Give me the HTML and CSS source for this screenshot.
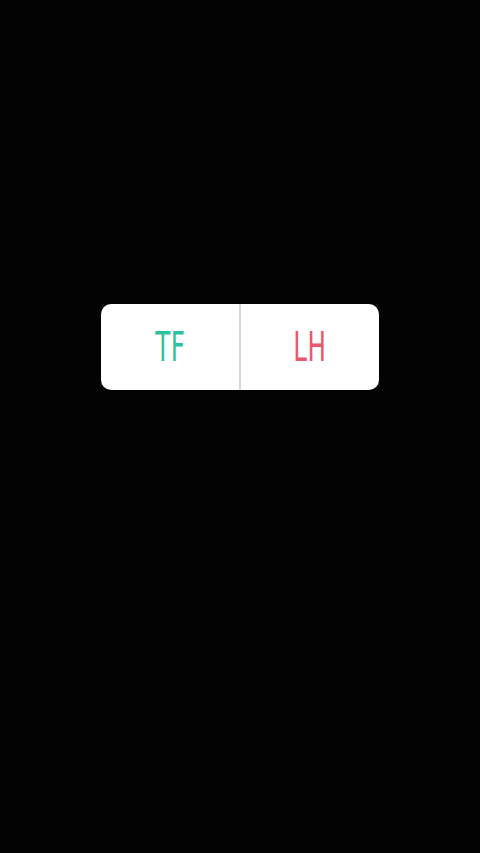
FILE: index.html
```html
<!DOCTYPE html>
<html>
<head>
<meta charset="utf-8">
<link rel="stylesheet" href="styles.css">
</head>
<body>
<div class="screen">
  <div class="card">
    <div class="option"><span class="label teal">TF</span></div>
    <div class="divider"></div>
    <div class="option"><span class="label pink">LH</span></div>
  </div>
</div>
</body>
</html>
```
FILE: styles.css
```css
html, body {
  margin: 0;
  padding: 0;
  background: #030303;
}
.screen {
  width: 480px;
  height: 853px;
  box-sizing: border-box;
  padding-top: 304px;
  display: flex;
  flex-direction: column;
  align-items: center;
}
.card {
  width: 278px;
  height: 86px;
  background: #fff;
  border-radius: 10px;
  display: flex;
  overflow: hidden;
}
.option {
  flex: 1;
  display: flex;
  align-items: center;
  justify-content: center;
}
.divider {
  width: 2px;
  background: #d6d6d6;
}
.label {
  font-family: "DejaVu Sans", sans-serif;
  font-weight: normal;
  font-size: 41px;
  line-height: 1;
  display: inline-block;
  transform: scaleX(0.6);
  letter-spacing: 1px;
}
.teal { color: #2cc3a0; }
.pink { color: #e9576f; }
```
